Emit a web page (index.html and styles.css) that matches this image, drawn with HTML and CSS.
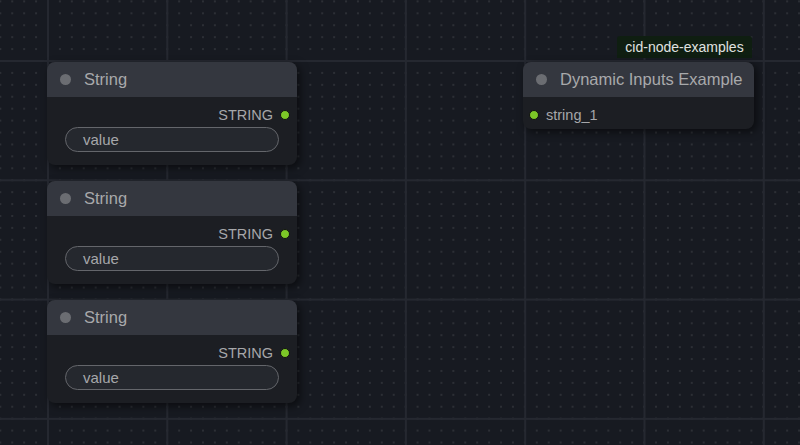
FILE: index.html
```html
<!DOCTYPE html>
<html>
<head>
<meta charset="utf-8">
<link rel="stylesheet" href="styles.css">
</head>
<body>
<div class="canvas">
  <div class="node node-s1">
    <div class="node-header"><span class="hdot"></span><span class="title">String</span></div>
    <div class="node-body">
      <div class="out-row"><span class="slot-label">STRING</span><span class="slot"></span></div>
      <div class="widget">value</div>
    </div>
  </div>
  <div class="node node-s2">
    <div class="node-header"><span class="hdot"></span><span class="title">String</span></div>
    <div class="node-body">
      <div class="out-row"><span class="slot-label">STRING</span><span class="slot"></span></div>
      <div class="widget">value</div>
    </div>
  </div>
  <div class="node node-s3">
    <div class="node-header"><span class="hdot"></span><span class="title">String</span></div>
    <div class="node-body">
      <div class="out-row"><span class="slot-label">STRING</span><span class="slot"></span></div>
      <div class="widget">value</div>
    </div>
  </div>
  <div class="badge">cid-node-examples</div>
  <div class="node node-dyn">
    <div class="node-header"><span class="hdot"></span><span class="title">Dynamic Inputs Example</span></div>
    <div class="node-body dyn-body">
      <div class="in-row"><span class="slot"></span><span class="slot-label">string_1</span></div>
    </div>
  </div>
</div>
</body>
</html>
```
FILE: styles.css
```css
html, body {
  margin: 0;
  padding: 0;
}
body {
  width: 800px;
  height: 445px;
  overflow: hidden;
  font-family: "Liberation Sans", Arial, sans-serif;
}
.canvas {
  position: relative;
  width: 800px;
  height: 445px;
  background-color: #171a21;
  background-image:
    linear-gradient(to right, #252830 2px, transparent 2px),
    linear-gradient(to bottom, #252830 2px, transparent 2px),
    radial-gradient(circle at 1px 1px, rgba(255,255,255,0.09) 0.9px, transparent 1.2px);
  background-size: 119.3px 119.3px, 119.3px 119.3px, 11.93px 11.93px;
  background-position: 47px 60px, 47px 60px, 47px 60px;
}
.node {
  position: absolute;
  width: 250px;
  border-radius: 8px;
  background: #1c1e23;
  box-shadow: 3px 3px 8px rgba(0,0,0,0.55);
  overflow: hidden;
}
.node-s1 { left: 47px; top: 62px; }
.node-s2 { left: 47px; top: 181px; }
.node-s3 { left: 47px; top: 300px; }
.node-dyn { left: 523px; top: 62px; width: 231px; }
.node-header {
  height: 35px;
  background: #34373f;
  display: flex;
  align-items: center;
  padding-left: 13px;
  gap: 13px;
}
.hdot {
  width: 11px;
  height: 11px;
  border-radius: 50%;
  background: #6b6d72;
  flex: none;
}
.title {
  color: #a8a9ab;
  font-size: 16.5px;
  line-height: 1;
}
.node-body {
  height: 68px;
  padding: 0;
  display: flex;
  flex-direction: column;
}
.out-row {
  height: 34px;
  padding-top: 2px;
  box-sizing: border-box;
  display: flex;
  justify-content: flex-end;
  align-items: center;
  padding-right: 7px;
  gap: 7px;
}
.slot-label {
  color: #a6a7aa;
  font-size: 14.5px;
  line-height: 1;
}
.slot {
  width: 8px;
  height: 8px;
  border-radius: 50%;
  background: #7cc727;
  border: 1px solid #111;
  flex: none;
}
.widget {
  margin: -4px 18px 0 18px;
  height: 23px;
  border: 1px solid #64666b;
  border-radius: 13px;
  background: #25282e;
  color: #a6a7aa;
  font-size: 15px;
  line-height: 23px;
  padding-left: 17px;
}
.dyn-body {
  height: 32px;
}
.in-row {
  height: 34px;
  padding-top: 4px;
  box-sizing: border-box;
  display: flex;
  align-items: center;
  padding-left: 6px;
  gap: 7px;
}
.badge {
  position: absolute;
  left: 617px;
  top: 36px;
  width: 135px;
  height: 22px;
  background: #0f1e11;
  color: #e0e2e0;
  font-size: 14px;
  line-height: 22px;
  text-align: center;
  border-radius: 3px 3px 0 0;
}
```
